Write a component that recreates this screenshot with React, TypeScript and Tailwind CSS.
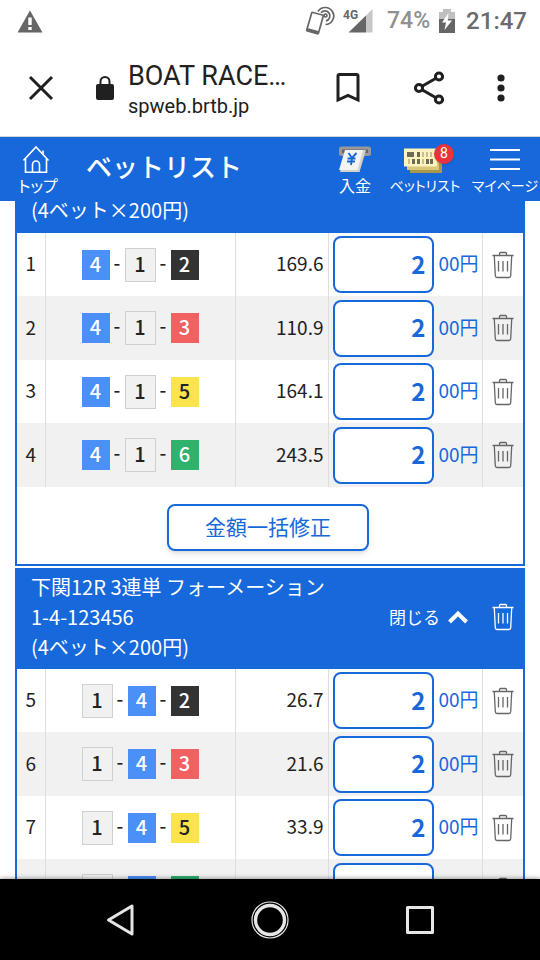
import React from "react";

type Boat = 1 | 2 | 3 | 4 | 5 | 6;

interface Bet {
  no: number;
  boats: [Boat, Boat, Boat];
  odds: string;
}

const boatStyle: Record<Boat, string> = {
  1: "w-[31px] h-[34px] border border-[#d0d0d0] bg-[#f1f1f1] text-[#222]",
  2: "w-7 h-[30px] bg-[#333] text-white",
  3: "w-7 h-[30px] bg-[#f16161] text-white",
  4: "w-7 h-[30px] bg-[#4a90f7] text-white",
  5: "w-7 h-[30px] bg-[#fbe34b] text-[#222]",
  6: "w-7 h-[30px] bg-[#2eb26c] text-white",
};

const firstBets: Bet[] = [
  { no: 1, boats: [4, 1, 2], odds: "169.6" },
  { no: 2, boats: [4, 1, 3], odds: "110.9" },
  { no: 3, boats: [4, 1, 5], odds: "164.1" },
  { no: 4, boats: [4, 1, 6], odds: "243.5" },
];

const secondBets: Bet[] = [
  { no: 5, boats: [1, 4, 2], odds: "26.7" },
  { no: 6, boats: [1, 4, 3], odds: "21.6" },
  { no: 7, boats: [1, 4, 5], odds: "33.9" },
  { no: 8, boats: [1, 4, 6], odds: "" },
];

function TrashIcon() {
  return (
    <svg width="22" height="28" viewBox="0 0 22 28" fill="none" stroke="currentColor" strokeWidth="1.3" aria-hidden="true">
      <path d="M0.5 4.5H21.5M7.5 4V2.5Q7.5 1.5 8.5 1.5H13.5Q14.5 1.5 14.5 2.5V4" />
      <path d="M2.3 5L3.3 24.8Q3.4 26.500 5 26.500H17Q18.600 26.500 18.700 24.800L19.700 5" />
      <path d="M6.500 10V20.500M11 10V20.500M15.500 10V20.500" />
    </svg>
  );
}

function StatusBar() {
  return (
    <div className="flex h-[42px] shrink-0 items-center pl-[17px] pr-[13px] font-['Roboto',sans-serif] text-[#6b6b6b]">
      <svg width="26" height="23" viewBox="0 0 26 23" aria-hidden="true">
        <path d="M13 0.500 25.500 22.500H0.500Z" fill="#666" />
        <path d="M11.300 7.500h3.400v7.500h-3.400zM11.300 17h3.400v3h-3.400z" fill="#fff" />
      </svg>
      <svg className="ml-auto" width="30" height="30" viewBox="0 0 30 30" fill="none" stroke="#666" strokeWidth="1.700" aria-hidden="true">
        <path d="M8 6.500 17.500 9q1 .3.700 1.300L13.500 27q-.3 1-1.300.7L2.500 25q-1-.3-.7-1.300L6.600 7.200q.3-1 1.400-.7Z" />
        <path d="M2 23.500l11 3" strokeWidth="3" />
        <circle cx="20.500" cy="9.500" r="1.500" />
        <path d="M16 6.800a5 5 0 1 1 5 8" />
        <path d="M13 5.500a8.500 8.500 0 1 1 7.500 13" />
      </svg>
      <svg className="ml-2" width="30" height="27" viewBox="0 0 30 27" aria-hidden="true">
        <path d="M23 7.500 29.500 1v23.500H23Z" fill="#c6c6c6" />
        <path d="M5.500 24.500 23 7.500v17Z" fill="#666" />
        <text x="0" y="11" fontSize="12" fontWeight="700" fill="#666" fontFamily="Roboto, sans-serif">4G</text>
      </svg>
      <span className="ml-[14px] text-[23px] font-medium leading-[42px] text-[#909090]">74%</span>
      <svg className="ml-2" width="18" height="26" viewBox="0 0 18 26" aria-hidden="true">
        <path d="M5 1h8v3h4v7H1V4h4Z" fill="#c0c0c0" />
        <path d="M1 11h16v14H1Z" fill="#666" />
        <path d="M10.500 5 4 14.500h4L6.500 22 14 12.500h-4.200Z" fill="#fff" />
      </svg>
      <span className="ml-[10px] text-[24px] font-medium leading-[42px]">21:47</span>
    </div>
  );
}

function BrowserBar() {
  return (
    <div className="flex h-[95px] shrink-0 items-center border-b border-[#d5d5d5] pb-[2px] pl-[28px] pr-[34px] font-['Roboto',sans-serif] text-[#202020]">
      <button type="button" aria-label="Close" className="block">
        <svg width="26" height="26" viewBox="0 0 26 26" fill="none" stroke="currentColor" strokeWidth="3" aria-hidden="true">
          <path d="M2 2l22 22M24 2 2 24" />
        </svg>
      </button>
      <svg className="ml-[41px] shrink-0" width="20" height="26" viewBox="0 0 20 26" aria-hidden="true">
        <path d="M5.500 10V6.500a4.500 4.500 0 0 1 9 0V10" fill="none" stroke="currentColor" strokeWidth="2" />
        <rect x="1" y="9" width="18" height="16" rx="2" fill="currentColor" />
      </svg>
      <div className="ml-[13px] whitespace-nowrap pt-1">
        <div className="text-[27px] leading-8">BOAT RACE…</div>
        <div className="text-[20px] leading-7">spweb.brtb.jp</div>
      </div>
      <button type="button" aria-label="Bookmark" className="ml-auto block">
        <svg width="26" height="32" viewBox="0 0 26 32" fill="none" stroke="currentColor" strokeWidth="3" strokeLinejoin="miter" aria-hidden="true">
          <path d="M3 28V4q0-1.500 1.500-1.500h17Q23 2.500 23 4v24l-10-4.500Z" />
        </svg>
      </button>
      <button type="button" aria-label="Share" className="ml-[52px] block">
        <svg width="32" height="34" viewBox="0 0 32 34" fill="none" stroke="currentColor" strokeWidth="3" aria-hidden="true">
          <circle cx="6" cy="17" r="3.600" />
          <circle cx="26" cy="5.500" r="3.600" />
          <circle cx="26" cy="28.500" r="3.600" />
          <path d="M9 15.300 23 7.200M9 18.700l14 8.100" />
        </svg>
      </button>
      <button type="button" aria-label="More" className="ml-[51px] block">
        <svg width="10" height="30" viewBox="0 0 10 30" fill="currentColor" aria-hidden="true">
          <circle cx="5" cy="5" r="3.600" />
          <circle cx="5" cy="15" r="3.600" />
          <circle cx="5" cy="25" r="3.600" />
        </svg>
      </button>
    </div>
  );
}

const shortLabel = "text-[16px] leading-5 whitespace-nowrap [font-feature-settings:'palt']";
const longLabel = "text-[14px] leading-5 whitespace-nowrap [font-feature-settings:'palt']";

function SiteHeader() {
  return (
    <header className="flex h-16 shrink-0 bg-[#1768db] text-white">
      <a href="#top" className="flex w-[76px] flex-col items-center pt-2">
        <svg width="30" height="30" viewBox="0 0 30 30" fill="none" stroke="currentColor" strokeWidth="1.600" aria-hidden="true">
          <path d="M0.500 15.500 13 2l12.500 13.500" />
          <path d="M2.500 14v13.200h21V14M20 9.500V5.500" />
          <path d="M9.500 27v-7.500a3.500 3.500 0 0 1 7 0V27" />
        </svg>
        <span className={shortLabel}>トップ</span>
      </a>
      <h1 className="ml-[10px] text-[26px] font-medium leading-[58px]">ベットリスト</h1>
      <a href="#deposit" className="ml-auto flex w-[68px] flex-col items-center pt-2">
        <svg width="34" height="30" viewBox="0 0 34 30" aria-hidden="true">
          <rect x="1" y="1.500" width="32" height="9.500" rx="2.500" fill="#999" />
          <rect x="4" y="4.500" width="26" height="3.500" fill="#666" />
          <path d="M8 5h20l-6.500 22H2Z" fill="#d5d2c8" />
          <path d="M7 5h18l-5.500 20H1Z" fill="#f3f3f3" />
          <path d="M10.500 8l3.500 5 4.500-5M14 13l-1 7M9.500 13.500h8M9 16.500h8" fill="none" stroke="#1768db" strokeWidth="1.900" />
        </svg>
        <span className={shortLabel}>入金</span>
      </a>
      <a href="#betlist" className="flex w-[72px] flex-col items-center pt-2">
        <span className="relative">
          <svg width="42" height="30" viewBox="0 0 42 30" aria-hidden="true">
            <path d="M6 8h32v20H6Z" fill="#a9984a" />
            <path d="M3 6h32v19H3Z" fill="#d9c878" />
            <path d="M0 3.500h33v18H0Z" fill="#fdf3be" />
            <path d="M3 7h7v5H3zM13 7h3v5h-3zM8 14h3v5H8zM13 14h3v5h-3zM22 14h3v5h-3zM26 14h3v5h-3z" fill="#6d6959" />
            <path d="M18 7h2v5h-2zM22 7h2v5h-2zM26 7h2v5h-2zM4 14h2v5H4zM18 14h2v5h-2z" fill="#c8bd8d" />
          </svg>
          <span className="absolute -right-2 -top-[1px] size-5 rounded-full bg-[#e6343a] text-center font-['Roboto',sans-serif] text-sm leading-[18px] shadow">8</span>
        </span>
        <span className={longLabel}>ベットリスト</span>
      </a>
      <a href="#mypage" className="ml-[9px] flex w-[70px] flex-col items-center pt-2">
        <svg width="30" height="30" viewBox="0 0 30 30" stroke="currentColor" strokeWidth="2" aria-hidden="true">
          <path d="M0 5h30M0 14.500h30M0 24h30" />
        </svg>
        <span className={longLabel}>マイページ</span>
      </a>
    </header>
  );
}

function BetRow({ bet }: { bet: Bet }) {
  const cell = "border-r border-[#dedede] p-0";
  return (
    <tr className="h-[63px] even:h-16 even:bg-[#f1f1f1]">
      <td className={cell + " text-center"}>
        <div className="pb-[3px]">{bet.no}</div>
      </td>
      <td className={cell}>
        <div className="flex items-center justify-center">
          {bet.boats.map((boat, i) => (
            <React.Fragment key={i}>
              {i > 0 && <span className="w-[15px] pb-[6px] text-center font-medium leading-6">-</span>}
              <span className={"flex items-center justify-center pb-[2px] font-medium text-[20px] " + boatStyle[boat]}>
                {boat}
              </span>
            </React.Fragment>
          ))}
        </div>
      </td>
      <td className={cell + " text-right"}>
        <div className="pb-[3px] pr-1">{bet.odds}</div>
      </td>
      <td className={cell}>
        <label className="flex items-center gap-[5px] pl-1 text-[#1768db]">
          <input
            type="text"
            inputMode="numeric"
            defaultValue="2"
            aria-label={"ベット" + bet.no + "の金額"}
            className="h-[57px] w-[101px] rounded-lg border-2 border-[#1768db] bg-white pb-[3px] pr-[6px] text-right text-[24px] font-bold"
          />
          <span className="whitespace-nowrap pb-[3px]">00円</span>
        </label>
      </td>
      <td className="p-0">
        <button type="button" aria-label="削除" className="mx-auto block text-[#666]">
          <TrashIcon />
        </button>
      </td>
    </tr>
  );
}

function BetTable({ bets }: { bets: Bet[] }) {
  return (
    <table className="w-full table-fixed border-collapse text-[19px] leading-6 text-[#222]">
      <colgroup>
        <col className="w-[28px]" />
        <col />
        <col className="w-[93px]" />
        <col className="w-[154px]" />
        <col className="w-[41px]" />
      </colgroup>
      <tbody>
        {bets.map((bet) => (
          <BetRow key={bet.no} bet={bet} />
        ))}
      </tbody>
    </table>
  );
}

function BetCards() {
  return (
    <main className="flex min-h-0 flex-1 flex-col gap-[2px] overflow-hidden px-[15px]">
      <section className="shrink-0 border-2 border-t-0 border-[#1768db]">
        <div className="h-8 bg-[#1768db] pl-[14px] text-[20px] leading-[18px] text-white">(4ベット×200円)</div>
        <BetTable bets={firstBets} />
        <div className="flex justify-center pb-[13px] pr-1 pt-[17px]">
          <button
            type="button"
            className="h-[47px] w-[202px] rounded-lg border-2 border-[#1768db] bg-white pb-[2px] text-[21px] text-[#1768db] shadow-md"
          >
            金額一括修正
          </button>
        </div>
      </section>
      <section className="shrink-0 border-2 border-[#1768db]">
        <div className="flex h-[99px] items-center bg-[#1768db] pb-[6px] pl-[14px] pr-[9px] text-white">
          <h2 className="flex-1 text-[20px] leading-[30px]">
            下関12R 3連単 フォーメーション
            <br />
            1-4-123456
            <br />
            (4ベット×200円)
          </h2>
          <button type="button" className="flex items-center gap-2 whitespace-nowrap text-[17px] leading-6">
            閉じる
            <svg width="20" height="14" viewBox="0 0 20 14" fill="none" stroke="currentColor" strokeWidth="4" aria-hidden="true">
              <path d="M1.500 12 10 3.500l8.500 8.500" />
            </svg>
          </button>
          <button type="button" aria-label="すべて削除" className="ml-6 block">
            <TrashIcon />
          </button>
        </div>
        <BetTable bets={secondBets} />
      </section>
    </main>
  );
}

function NavigationBar() {
  return (
    <nav className="z-10 flex h-[81px] shrink-0 items-center justify-center bg-black text-[#e6e6e6] shadow-[0_0_5px_rgba(0,0,0,0.5)]">
      <button type="button" aria-label="Back" className="flex w-[150px] justify-center">
        <svg width="30" height="36" viewBox="0 0 30 36" fill="none" stroke="currentColor" strokeWidth="3" strokeLinejoin="round" aria-hidden="true">
          <path d="M27 4v28L3.500 18Z" />
        </svg>
      </button>
      <button type="button" aria-label="Home" className="flex w-[150px] justify-center">
        <svg width="38" height="38" viewBox="0 0 38 38" fill="none" stroke="currentColor" aria-hidden="true">
          <circle cx="19" cy="19" r="18" strokeWidth="1.200" />
          <circle cx="19" cy="19" r="14.500" strokeWidth="3.400" />
        </svg>
      </button>
      <button type="button" aria-label="Recents" className="flex w-[150px] justify-center">
        <svg width="30" height="30" viewBox="0 0 30 30" fill="none" stroke="currentColor" strokeWidth="3" strokeLinejoin="round" aria-hidden="true">
          <rect x="2.500" y="2.500" width="25" height="25" />
        </svg>
      </button>
    </nav>
  );
}

export default function App() {
  return (
    <div lang="ja" className="flex h-screen flex-col overflow-hidden bg-white font-['Noto_Sans_CJK_JP',sans-serif]">
      <StatusBar />
      <BrowserBar />
      <SiteHeader />
      <BetCards />
      <NavigationBar />
    </div>
  );
}
